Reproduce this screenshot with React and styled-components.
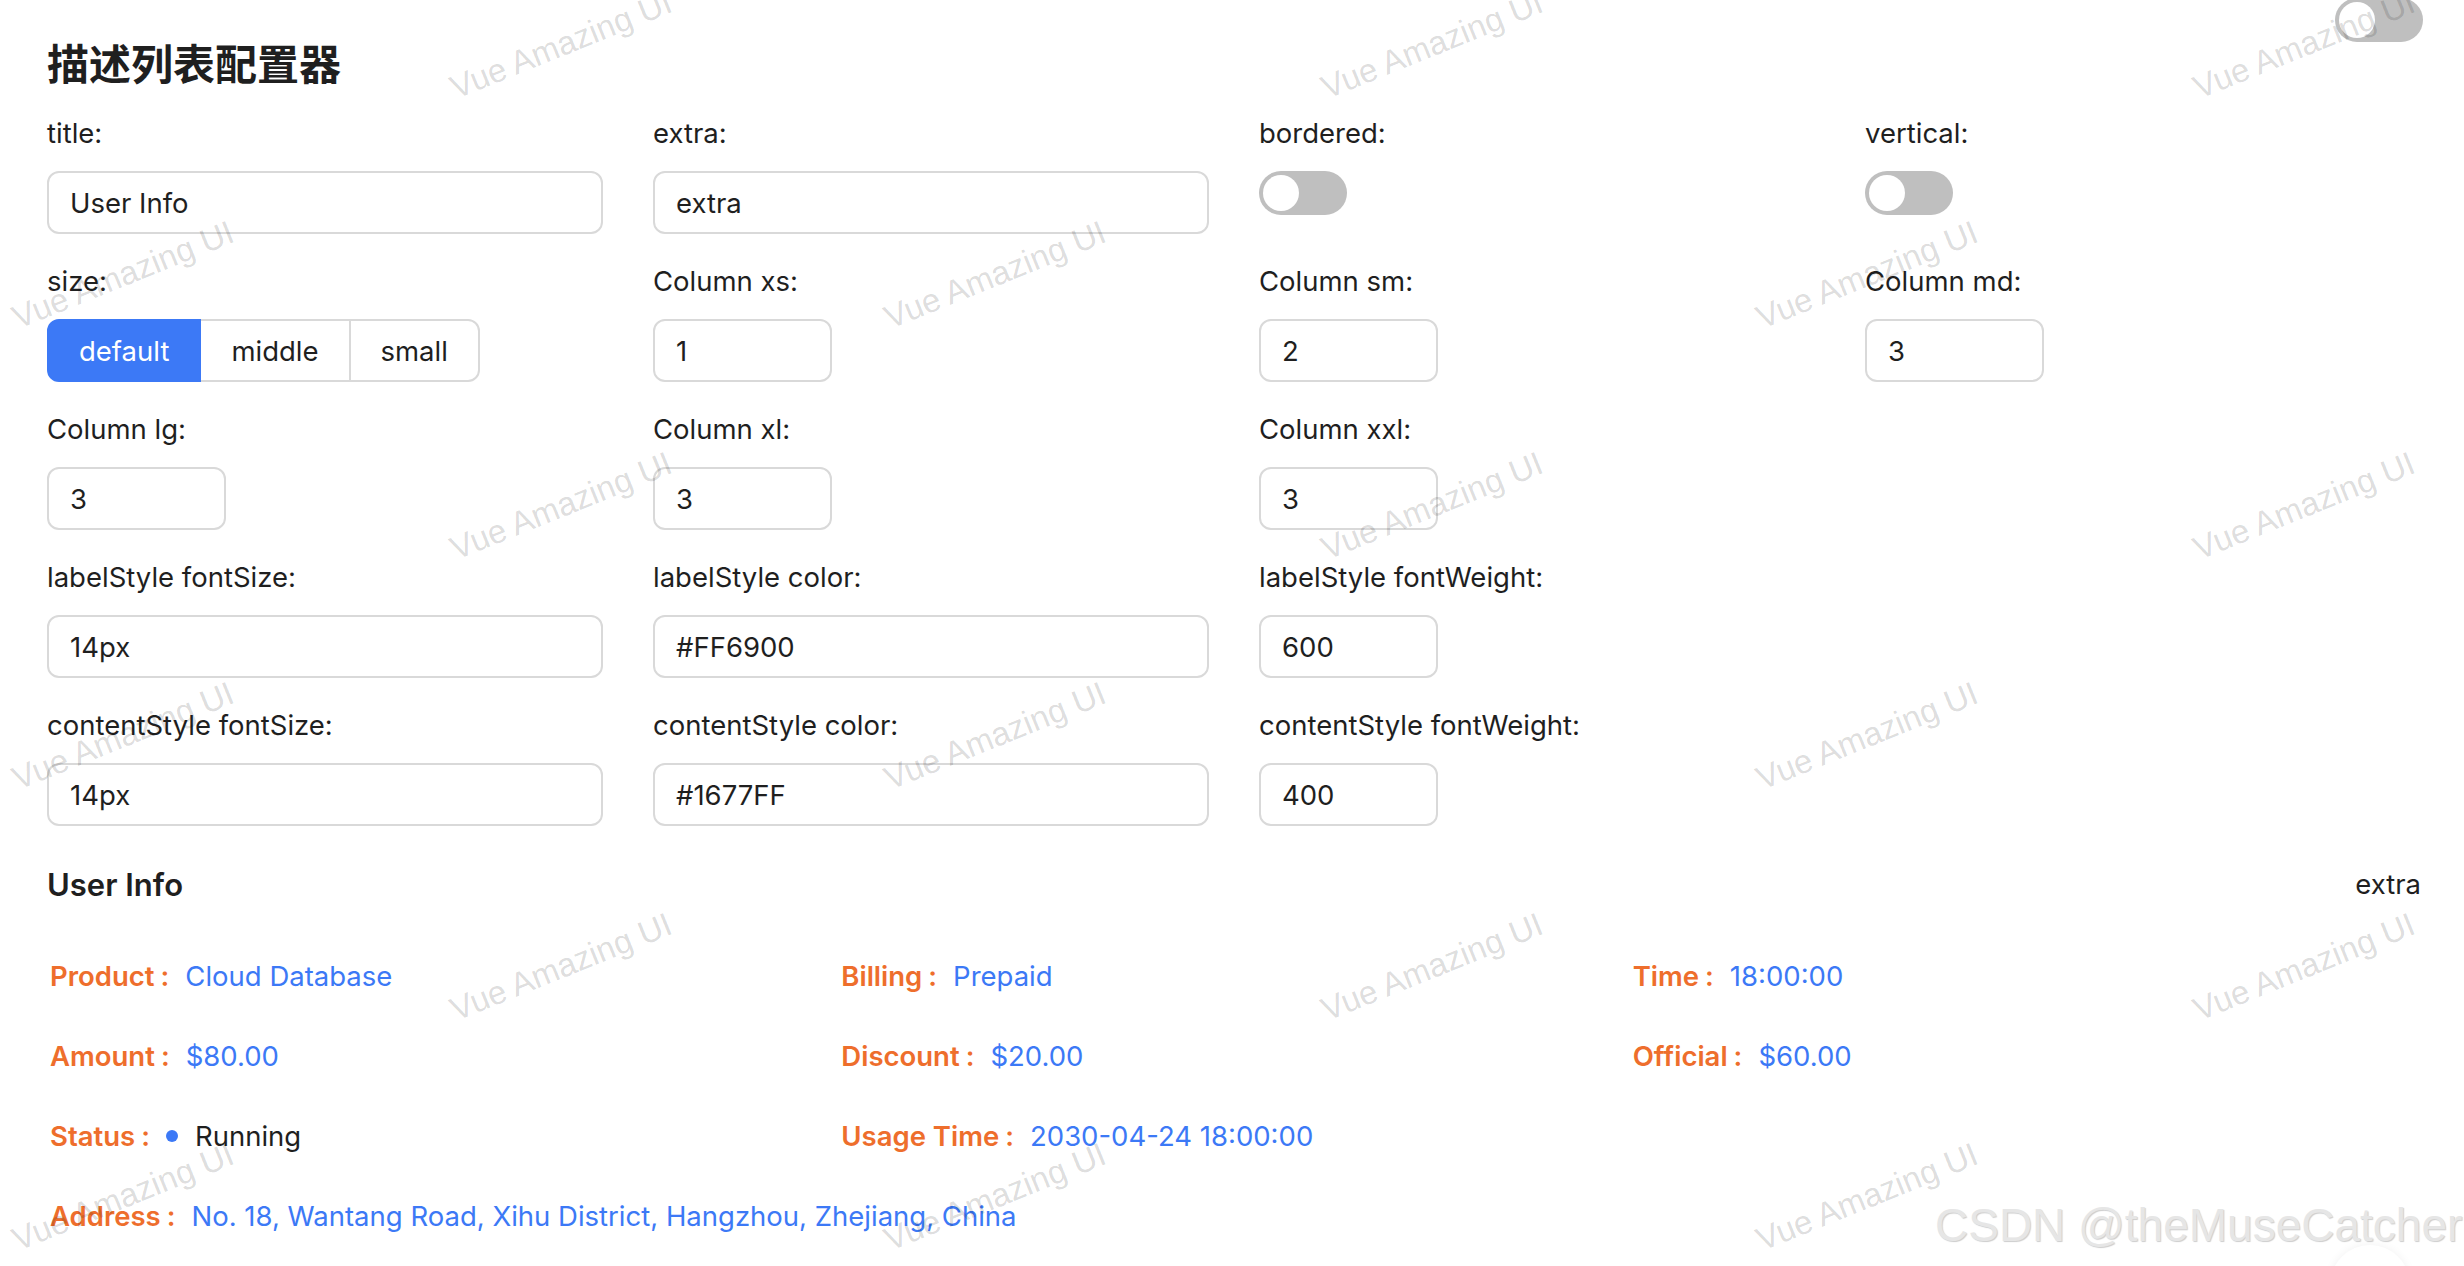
import React from 'react';
import styled, { createGlobalStyle } from 'styled-components';

const GlobalStyle = createGlobalStyle`
  html, body {
    margin: 0;
    padding: 0;
    background: #ffffff;
    overflow: hidden;
  }
  body {
    font-family: Inter, "Noto Sans CJK SC", sans-serif;
    color: rgba(0, 0, 0, 0.88);
  }
  * { box-sizing: border-box; }
`;

const Page = styled.div`
  position: relative;
  width: 2464px;
  height: 1266px;
  overflow: hidden;
  padding: 0 43px 0 47px;
`;

const Title = styled.h2`
  margin: 34px 0 21px;
  font-family: "Noto Sans CJK SC", sans-serif;
  font-size: 42px;
  line-height: 56px;
  font-weight: 700;
  color: #1f1f1f;
`;

const FormGrid = styled.div`
  display: grid;
  grid-template-columns: repeat(4, 556px);
  column-gap: 50px;
  row-gap: 25px;
  align-items: start;
`;

const Field = styled.div`
  display: flex;
  flex-direction: column;
  align-items: flex-start;
  gap: 16px;
`;

const Label = styled.div`
  height: 44px;
  font-size: 27.5px;
  line-height: 44px;
  white-space: nowrap;
  color: #1f1f1f;
`;

const TextInput = styled.input`
  width: ${(p) => (p.$narrow ? '179px' : '100%')};
  height: 63px;
  margin: 0;
  padding: 0 21px;
  border: 2px solid #d9d9d9;
  border-radius: 12px;
  background: #fff;
  font: inherit;
  font-size: 27.5px;
  color: #1f1f1f;
  outline: none;
`;

const Segmented = styled.div`
  display: flex;
  height: 63px;
`;

const SegButton = styled.button`
  height: 63px;
  margin: 0 0 0 -2px;
  padding: 0 30px;
  border: 2px solid ${(p) => (p.$active ? '#3c79f6' : '#d9d9d9')};
  background: ${(p) => (p.$active ? '#3c79f6' : '#ffffff')};
  color: ${(p) => (p.$active ? '#ffffff' : '#1f1f1f')};
  font: inherit;
  font-size: 27.5px;
  position: relative;
  z-index: ${(p) => (p.$active ? 1 : 0)};
  &:first-child {
    margin-left: 0;
    border-radius: 12px 0 0 12px;
  }
  &:last-child {
    border-radius: 0 12px 12px 0;
  }
`;

const SwitchTrack = styled.div`
  width: 88px;
  height: 44px;
  border-radius: 22px;
  background: #bfbfbf;
  padding: 4px;
  display: flex;
  align-items: center;
`;

const SwitchKnob = styled.span`
  width: 36px;
  height: 36px;
  border-radius: 50%;
  background: #ffffff;
`;

const CornerSwitch = styled(SwitchTrack)`
  position: absolute;
  top: -2px;
  left: 2335px;
  z-index: 2;
`;

const DescHeader = styled.div`
  display: flex;
  justify-content: space-between;
  align-items: center;
  height: 44px;
  margin: 36px 0 48px;
`;

const DescTitle = styled.div`
  font-size: 31px;
  font-weight: 600;
  color: #1f1f1f;
`;

const DescExtra = styled.div`
  font-size: 27.5px;
  color: #1f1f1f;
`;

const DescGrid = styled.div`
  display: grid;
  grid-template-columns: repeat(3, 1fr);
`;

const DescItem = styled.div`
  grid-column: span ${(p) => p.$span || 1};
  display: flex;
  align-items: center;
  height: 44px;
  margin-bottom: 36px;
  padding-left: 3px;
  font-size: 27.5px;
  white-space: nowrap;
`;

const DescLabel = styled.span`
  color: #ee6e2c;
  font-weight: 600;
  &::after {
    content: ':';
    margin: 0 16px 0 6px;
  }
`;

const DescContent = styled.span`
  display: inline-flex;
  align-items: center;
  color: ${(p) => p.$color || '#3c79f6'};
`;

const StatusDot = styled.span`
  width: 12px;
  height: 12px;
  border-radius: 50%;
  background: #3c79f6;
  margin-right: 17px;
`;

const WatermarkLayer = styled.div`
  position: absolute;
  inset: 0;
  pointer-events: none;
  z-index: 5;
`;

const Mark = styled.span`
  position: absolute;
  transform: translate(-50%, -50%) rotate(-22deg);
  font-family: "Liberation Sans", Arial, sans-serif;
  font-size: 33px;
  color: rgba(0, 0, 0, 0.15);
  white-space: nowrap;
`;

const Signature = styled.div`
  position: absolute;
  left: 1935px;
  top: 1202px;
  font-family: "Liberation Sans", Arial, sans-serif;
  font-size: 46px;
  line-height: 1;
  color: #e6e6e6;
  text-shadow: 1px 1px 1px rgba(0, 0, 0, 0.2);
  white-space: nowrap;
  z-index: 6;
`;

const BackTop = styled.div`
  position: absolute;
  left: 2330px;
  top: 1245px;
  width: 80px;
  height: 80px;
  border-radius: 50%;
  background: #ffffff;
  box-shadow: 0 0 10px rgba(0, 0, 0, 0.06);
  z-index: 4;
`;

const Switch = () => (
  <SwitchTrack>
    <SwitchKnob />
  </SwitchTrack>
);

const marks = [];
for (let r = 0; r < 6; r++) {
  const y = 45 + r * 230.4;
  const xs = r % 2 === 0 ? [561, 1432, 2304] : [123, 995, 1867];
  xs.forEach((x) => marks.push({ x, y }));
}

const items = [
  { label: 'Product', content: 'Cloud Database' },
  { label: 'Billing', content: 'Prepaid' },
  { label: 'Time', content: '18:00:00' },
  { label: 'Amount', content: '$80.00' },
  { label: 'Discount', content: '$20.00' },
  { label: 'Official', content: '$60.00' },
];

export default function App() {
  return (
    <>
      <GlobalStyle />
      <Page>
        <Title>描述列表配置器</Title>
        <FormGrid>
          <Field>
            <Label>title:</Label>
            <TextInput readOnly value="User Info" />
          </Field>
          <Field>
            <Label>extra:</Label>
            <TextInput readOnly value="extra" />
          </Field>
          <Field>
            <Label>bordered:</Label>
            <Switch />
          </Field>
          <Field>
            <Label>vertical:</Label>
            <Switch />
          </Field>

          <Field>
            <Label>size:</Label>
            <Segmented>
              <SegButton $active>default</SegButton>
              <SegButton>middle</SegButton>
              <SegButton>small</SegButton>
            </Segmented>
          </Field>
          <Field>
            <Label>Column xs:</Label>
            <TextInput $narrow readOnly value="1" />
          </Field>
          <Field>
            <Label>Column sm:</Label>
            <TextInput $narrow readOnly value="2" />
          </Field>
          <Field>
            <Label>Column md:</Label>
            <TextInput $narrow readOnly value="3" />
          </Field>

          <Field>
            <Label>Column lg:</Label>
            <TextInput $narrow readOnly value="3" />
          </Field>
          <Field>
            <Label>Column xl:</Label>
            <TextInput $narrow readOnly value="3" />
          </Field>
          <Field>
            <Label>Column xxl:</Label>
            <TextInput $narrow readOnly value="3" />
          </Field>
          <div />

          <Field>
            <Label>labelStyle fontSize:</Label>
            <TextInput readOnly value="14px" />
          </Field>
          <Field>
            <Label>labelStyle color:</Label>
            <TextInput readOnly value="#FF6900" />
          </Field>
          <Field>
            <Label>labelStyle fontWeight:</Label>
            <TextInput $narrow readOnly value="600" />
          </Field>
          <div />

          <Field>
            <Label>contentStyle fontSize:</Label>
            <TextInput readOnly value="14px" />
          </Field>
          <Field>
            <Label>contentStyle color:</Label>
            <TextInput readOnly value="#1677FF" />
          </Field>
          <Field>
            <Label>contentStyle fontWeight:</Label>
            <TextInput $narrow readOnly value="400" />
          </Field>
          <div />
        </FormGrid>

        <DescHeader>
          <DescTitle>User Info</DescTitle>
          <DescExtra>extra</DescExtra>
        </DescHeader>
        <DescGrid>
          {items.map((it) => (
            <DescItem key={it.label}>
              <DescLabel>{it.label}</DescLabel>
              <DescContent>{it.content}</DescContent>
            </DescItem>
          ))}
          <DescItem>
            <DescLabel>Status</DescLabel>
            <DescContent $color="#1f1f1f">
              <StatusDot />
              Running
            </DescContent>
          </DescItem>
          <DescItem $span={2}>
            <DescLabel>Usage Time</DescLabel>
            <DescContent>2030-04-24 18:00:00</DescContent>
          </DescItem>
          <DescItem $span={3}>
            <DescLabel>Address</DescLabel>
            <DescContent>No. 18, Wantang Road, Xihu District, Hangzhou, Zhejiang, China</DescContent>
          </DescItem>
        </DescGrid>

        <CornerSwitch>
          <SwitchKnob />
        </CornerSwitch>
        <BackTop />
        <WatermarkLayer>
          {marks.map((m, i) => (
            <Mark key={i} style={{ left: m.x, top: m.y }}>
              Vue Amazing UI
            </Mark>
          ))}
        </WatermarkLayer>
        <Signature>CSDN @theMuseCatcher</Signature>
      </Page>
    </>
  );
}
